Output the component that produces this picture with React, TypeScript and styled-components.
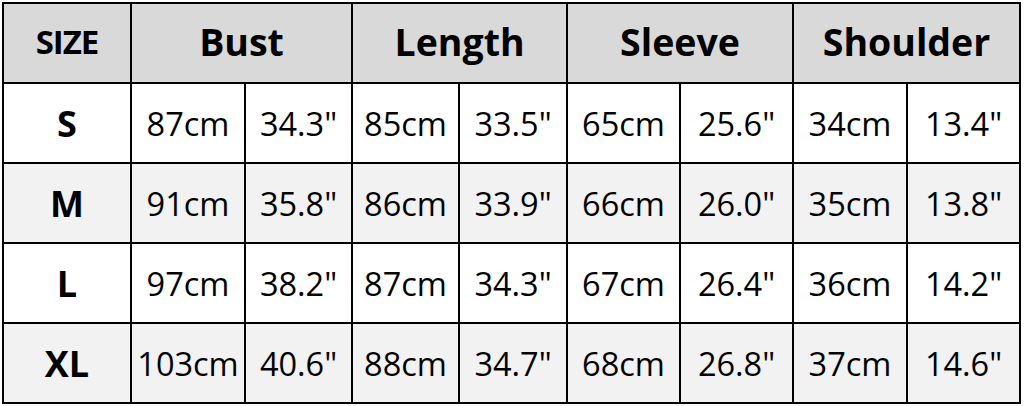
import styled, { createGlobalStyle } from "styled-components";

const GlobalStyle = createGlobalStyle`
  html, body {
    margin: 0;
    padding: 0;
    background: #ffffff;
  }
  body {
    font-family: "Open Sans", "Noto Sans", sans-serif;
    color: #000;
  }
`;

const Page = styled.div`
  width: 1024px;
  height: 406px;
  padding: 2px 0 0 2px;
  box-sizing: border-box;
  background: #fff;
`;

const Table = styled.table`
  border-collapse: collapse;
  table-layout: fixed;
  width: 1019px;
`;

const HeadRow = styled.tr`
  height: 80px;
  background: #d9d9d9;
`;

const Row = styled.tr<{ $shaded: boolean }>`
  height: 80px;
  background: ${({ $shaded }) => ($shaded ? "#f2f2f2" : "#ffffff")};
`;

const HeadCell = styled.th<{ $small?: boolean }>`
  border: 2px solid #000;
  padding: 0 0 3px;
  font-weight: 700;
  font-size: ${({ $small }) => ($small ? "33px" : "37.5px")};
  letter-spacing: ${({ $small }) => ($small ? "-1px" : "0")};
  text-align: center;
  vertical-align: middle;
`;

const SizeCell = styled.td`
  border: 2px solid #000;
  padding: 0;
  font-weight: 700;
  font-size: 36px;
  text-align: center;
`;

const Cell = styled.td`
  border: 2px solid #000;
  padding: 0;
  font-size: 32.5px;
  text-align: center;
  white-space: nowrap;
`;

const widths = [128, 114, 107, 107, 108, 113, 113, 114, 113];

const rows = [
  { size: "S", values: ["87cm", '34.3"', "85cm", '33.5"', "65cm", '25.6"', "34cm", '13.4"'] },
  { size: "M", values: ["91cm", '35.8"', "86cm", '33.9"', "66cm", '26.0"', "35cm", '13.8"'] },
  { size: "L", values: ["97cm", '38.2"', "87cm", '34.3"', "67cm", '26.4"', "36cm", '14.2"'] },
  { size: "XL", values: ["103cm", '40.6"', "88cm", '34.7"', "68cm", '26.8"', "37cm", '14.6"'] },
];

const App = () => {
  return (
    <Page>
      <GlobalStyle />
      <Table>
        <colgroup>
          {widths.map((w, i) => (
            <col key={i} style={{ width: w }} />
          ))}
        </colgroup>
        <thead>
          <HeadRow>
            <HeadCell $small>SIZE</HeadCell>
            <HeadCell colSpan={2}>Bust</HeadCell>
            <HeadCell colSpan={2}>Length</HeadCell>
            <HeadCell colSpan={2}>Sleeve</HeadCell>
            <HeadCell colSpan={2}>Shoulder</HeadCell>
          </HeadRow>
        </thead>
        <tbody>
          {rows.map((r, i) => (
            <Row key={r.size} $shaded={i % 2 === 1}>
              <SizeCell>{r.size}</SizeCell>
              {r.values.map((v, j) => (
                <Cell key={j}>{v}</Cell>
              ))}
            </Row>
          ))}
        </tbody>
      </Table>
    </Page>
  );
};

export default App;
